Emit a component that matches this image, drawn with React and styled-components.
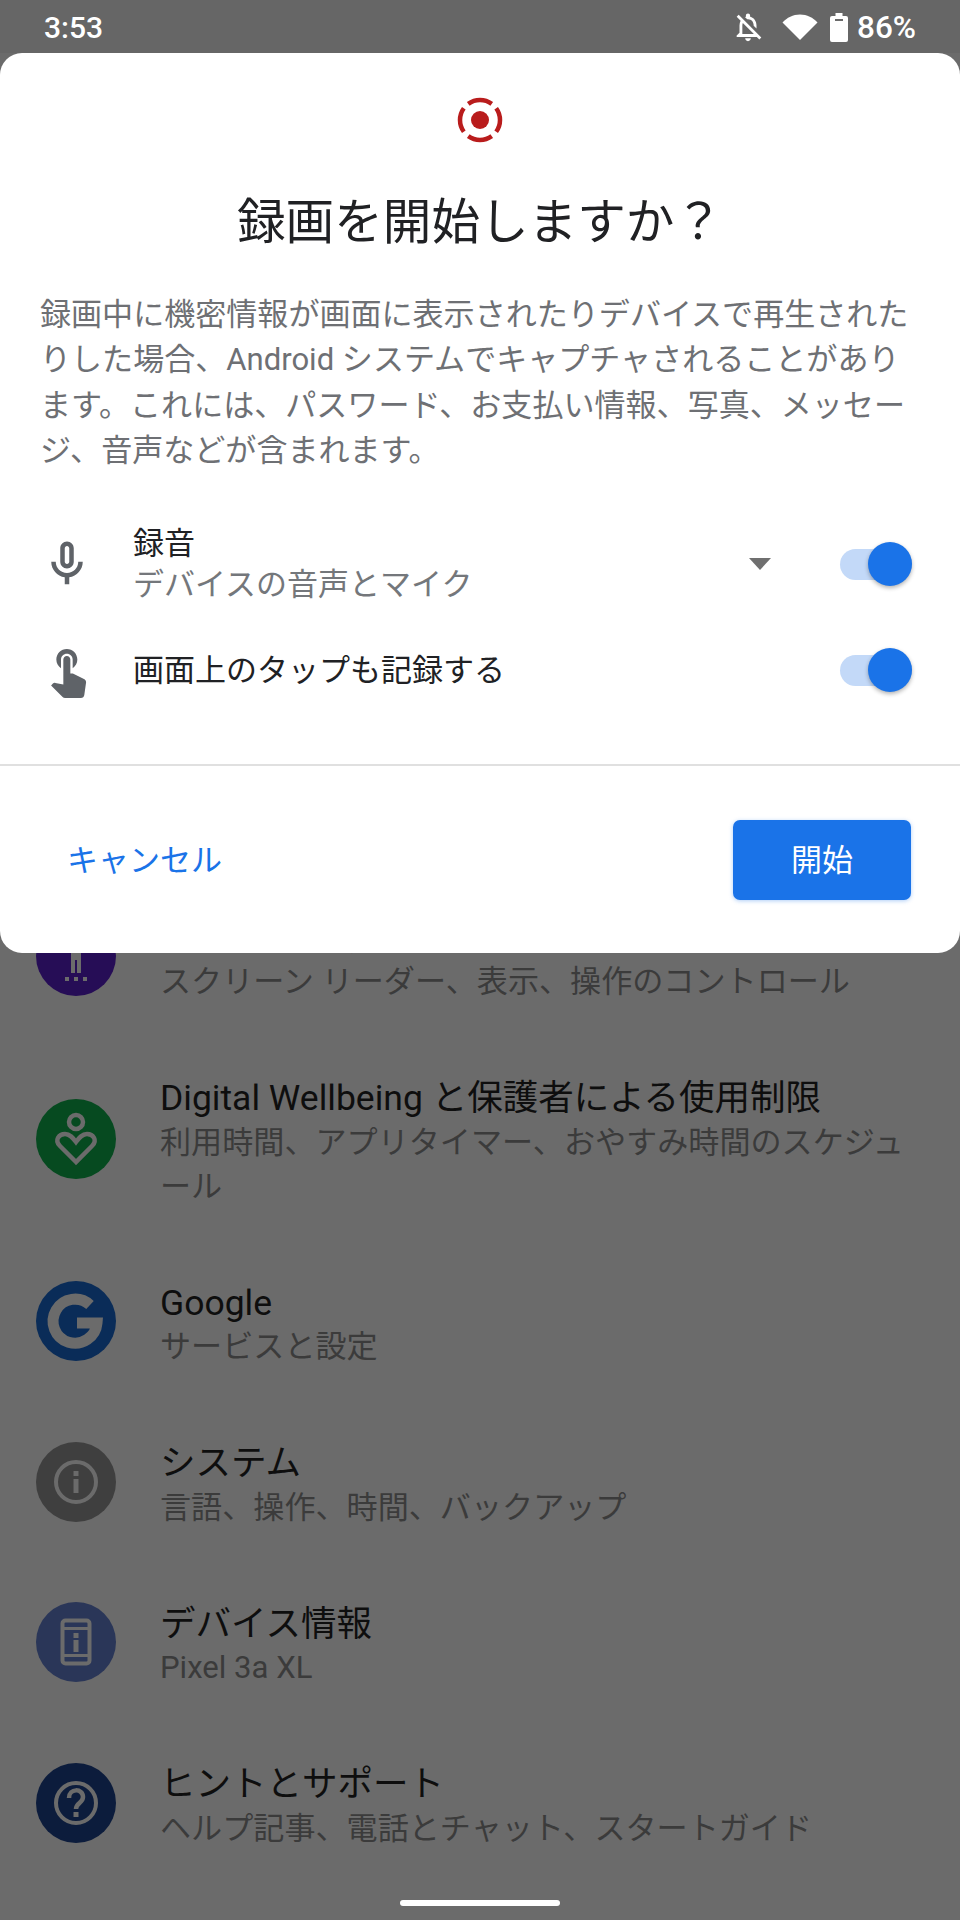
import React from 'react';
import styled, { createGlobalStyle } from 'styled-components';

const Global = createGlobalStyle`
  html, body {
    margin: 0;
    padding: 0;
    background: #6b6b6b;
  }
  * {
    box-sizing: border-box;
  }
`;

const FONT = `Roboto, "Noto Sans CJK JP", "Noto Sans", sans-serif`;

const settings = [
  {
    title: 'ユーザー補助',
    lines: ['スクリーン リーダー、表示、操作のコントロール'],
    color: '#260d56',
    icon: 'a11y',
  },
  {
    title: 'Digital Wellbeing と保護者による使用制限',
    lines: ['利用時間、アプリタイマー、おやすみ時間のスケジュ', 'ール'],
    color: '#064a20',
    icon: 'wellbeing',
  },
  { title: 'Google', lines: ['サービスと設定'], color: '#0a2c58', icon: 'google' },
  { title: 'システム', lines: ['言語、操作、時間、バックアップ'], color: '#3f3f3f', icon: 'info' },
  { title: 'デバイス情報', lines: ['Pixel 3a XL'], color: '#2a3658', icon: 'device' },
  { title: 'ヒントとサポート', lines: ['ヘルプ記事、電話とチャット、スタートガイド'], color: '#0c1c3c', icon: 'help' },
];

function SettingIcon({ name }) {
  const c = '#6b6b6b';
  if (name === 'a11y') {
    return (
      <svg width="80" height="80" viewBox="0 0 80 80" fill={c}>
        <rect x="35" y="20" width="10" height="24" />
        <rect x="35" y="44" width="4" height="13" />
        <rect x="41" y="44" width="4" height="13" />
        <rect x="29" y="61" width="4" height="4" />
        <rect x="38" y="61" width="4" height="4" />
        <rect x="47" y="61" width="4" height="4" />
      </svg>
    );
  }
  if (name === 'wellbeing') {
    return (
      <svg width="80" height="80" viewBox="0 0 80 80" fill="none" stroke={c} strokeWidth="4.5">
        <circle cx="40" cy="23" r="7" />
        <path d="M40 63 L24 47 C18 41 23 35 29 35 C34 35 37 39 40 43 C43 39 46 35 51 35 C57 35 62 41 56 47 Z" />
      </svg>
    );
  }
  if (name === 'google') {
    return (
      <svg width="80" height="80" viewBox="0 0 80 80" fill="none" stroke={c} strokeWidth="11">
        <path d="M54 24 A 22 22 0 1 0 61 42 L41 42" />
      </svg>
    );
  }
  if (name === 'info') {
    return (
      <svg width="80" height="80" viewBox="0 0 80 80" fill={c}>
        <circle cx="40" cy="40" r="20" fill="none" stroke={c} strokeWidth="4" />
        <rect x="37.5" y="37" width="5" height="14" />
        <rect x="37.5" y="29" width="5" height="5" />
      </svg>
    );
  }
  if (name === 'device') {
    return (
      <svg width="80" height="80" viewBox="0 0 80 80" fill={c}>
        <rect x="26.5" y="18.5" width="27" height="43" rx="3" fill="none" stroke={c} strokeWidth="4" />
        <rect x="26" y="25" width="28" height="3" />
        <rect x="26" y="52" width="28" height="3" />
        <rect x="37.5" y="38" width="5" height="12" />
        <rect x="37.5" y="31" width="5" height="5" />
      </svg>
    );
  }
  return (
    <svg width="80" height="80" viewBox="0 0 80 80" fill="none" stroke={c}>
      <circle cx="40" cy="40" r="20" strokeWidth="4" />
      <path d="M33 35 C33 25 47 25 47 34 C47 40 40 40 40 46" strokeWidth="4.5" />
      <rect x="37.5" y="49" width="5" height="5" fill={c} stroke="none" />
    </svg>
  );
}

export default function App() {
  return (
    <Page>
      <Global />
      <StatusBar>
        <Clock>3:53</Clock>
        <StatusIcons>
          <svg width="34" height="34" viewBox="0 0 24 24" fill="#fff">
            <path d="M12 22c1.1 0 2-.9 2-2h-4c0 1.1.9 2 2 2zm0-15.5c2.49 0 4 2.02 4 4.5v.1l2 2V11c0-3.07-1.63-5.64-4.5-6.32V4c0-.83-.67-1.5-1.5-1.5s-1.5.67-1.5 1.5v.68c-.24.06-.47.15-.69.23l1.64 1.64c.18-.02.36-.05.55-.05zM5.41 3.35L4 4.76l2.81 2.81C6.29 8.57 6 9.74 6 11v5l-2 2v1h14.24l1.74 1.74 1.41-1.41L5.41 3.35zM16 17H8v-6c0-.68.12-1.32.34-1.9L16 16.76V17z" />
          </svg>
          <WifiIcon width="36" height="28" viewBox="0 0 36 28" fill="#fff">
            <path d="M0.5 9.5 C5 4.5 11 1.5 18 1.5 S31 4.5 35.5 9.5 L18 27 Z" />
          </WifiIcon>
          <BatteryIcon width="18" height="29" viewBox="0 0 18 29" fill="#fff">
            <path d="M5.5 0 H12.5 V3 H16 a2 2 0 0 1 2 2 V27 a2 2 0 0 1 -2 2 H2 a2 2 0 0 1 -2 -2 V5 a2 2 0 0 1 2 -2 H5.5 Z" />
            <rect x="5" y="6" width="8" height="2" fill="#6b6b6b" />
          </BatteryIcon>
          <Percent>86%</Percent>
        </StatusIcons>
      </StatusBar>

      <SettingsList>
        {settings.map((item) => (
          <SettingRow key={item.title}>
            <IconCircle $color={item.color}>
              <SettingIcon name={item.icon} />
            </IconCircle>
            <SettingText>
              <SettingTitle>{item.title}</SettingTitle>
              {item.lines.map((line) => (
                <SettingSub key={line}>{line}</SettingSub>
              ))}
            </SettingText>
          </SettingRow>
        ))}
      </SettingsList>

      <HomeBar />

      <Dialog>
        <RecordIcon width="48" height="48" viewBox="0 0 48 48" fill="none" stroke="#b91c1c" strokeWidth="4.5">
          <path d="M12.24 7.82 A20 20 0 0 1 35.76 7.82" />
          <path d="M40.18 12.24 A20 20 0 0 1 40.18 35.76" />
          <path d="M35.76 40.18 A20 20 0 0 1 12.24 40.18" />
          <path d="M7.82 35.76 A20 20 0 0 1 7.82 12.24" />
          <circle cx="24" cy="24" r="9" fill="#b91c1c" stroke="none" />
        </RecordIcon>
        <Title>録画を開始しますか？</Title>
        <Body>
          録画中に機密情報が画面に表示されたりデバイスで再生された
          <br />
          りした場合、Android システムでキャプチャされることがあり
          <br />
          ます。これには、パスワード、お支払い情報、写真、メッセー
          <br />
          ジ、音声などが含まれます。
        </Body>

        <OptionList>
          <OptionRow>
            <OptionIcon>
              <svg width="54" height="54" viewBox="0 0 24 24" fill="#5f6368">
                <path
                  fillRule="evenodd"
                  d="M12 14c1.66 0 3-1.34 3-3V5c0-1.66-1.34-3-3-3S9 3.34 9 5v6c0 1.66 1.34 3 3 3zM11 5c0-.55.45-1 1-1s1 .45 1 1v6c0 .55-.45 1-1 1s-1-.45-1-1V5zM17 11c0 2.76-2.24 5-5 5s-5-2.24-5-5H5c0 3.53 2.61 6.43 6 6.92V21h2v-3.08c3.39-.49 6-3.39 6-6.92h-2z"
                />
              </svg>
            </OptionIcon>
            <OptionText>
              <OptionLabel>録音</OptionLabel>
              <OptionHint>デバイスの音声とマイク</OptionHint>
            </OptionText>
            <Caret />
            <Toggle />
          </OptionRow>
          <OptionRow>
            <OptionIcon>
              <svg width="56" height="56" viewBox="0 0 24 24" fill="#5f6368">
                <path d="M9 11.24V7.5C9 6.12 10.12 5 11.5 5S14 6.12 14 7.5v3.74c1.21-.81 2-2.18 2-3.74C16 5.01 13.99 3 11.5 3S7 5.01 7 7.5c0 1.56.79 2.93 2 3.74zm9.84 4.63l-4.54-2.26c-.17-.07-.35-.11-.54-.11H13v-6c0-.83-.67-1.5-1.5-1.5S10 6.67 10 7.5v10.74l-3.43-.72c-.08-.01-.15-.03-.24-.03-.31 0-.59.13-.79.33l-.79.8 4.94 4.94c.27.27.65.44 1.06.44h6.79c.75 0 1.33-.55 1.44-1.28l.75-5.27c.01-.07.02-.14.02-.2 0-.62-.38-1.16-.91-1.38z" />
              </svg>
            </OptionIcon>
            <OptionText>
              <OptionLabel>画面上のタップも記録する</OptionLabel>
            </OptionText>
            <Toggle />
          </OptionRow>
        </OptionList>

        <Divider />
        <Footer>
          <CancelButton>キャンセル</CancelButton>
          <StartButton>開始</StartButton>
        </Footer>
      </Dialog>
    </Page>
  );
}

const Page = styled.div`
  position: relative;
  width: 960px;
  height: 1920px;
  overflow: hidden;
  background: #6b6b6b;
  font-family: ${FONT};
`;

const StatusBar = styled.div`
  display: flex;
  align-items: center;
  justify-content: space-between;
  height: 53px;
  padding: 1px 44px 0 44px;
  background: #666666;
  color: #fff;
`;

const Clock = styled.span`
  font-size: 30px;
  font-weight: 500;
`;

const StatusIcons = styled.div`
  display: flex;
  align-items: center;
`;

const WifiIcon = styled.svg`
  margin-left: 17px;
`;

const BatteryIcon = styled.svg`
  margin-left: 12px;
`;

const Percent = styled.span`
  margin-left: 9px;
  font-size: 31.5px;
  font-weight: 500;
`;

const SettingsList = styled.div`
  display: flex;
  flex-direction: column;
  margin-top: 823px;
`;

const SettingRow = styled.div`
  display: flex;
  align-items: center;
  gap: 44px;
  padding: 31.7px 20px 31.7px 36px;
`;

const IconCircle = styled.div`
  flex: none;
  width: 80px;
  height: 80px;
  border-radius: 50%;
  background: ${(p) => p.$color};
`;

const SettingText = styled.div`
  padding-top: 8px;
`;

const SettingTitle = styled.div`
  font-size: 35.5px;
  line-height: 44.5px;
  color: #0e0e0e;
  white-space: nowrap;
`;

const SettingSub = styled.div`
  font-size: 31.1px;
  line-height: 44.5px;
  color: #3b3b3b;
  white-space: nowrap;
`;

const HomeBar = styled.div`
  position: absolute;
  left: 400px;
  bottom: 14px;
  width: 160px;
  height: 6px;
  border-radius: 3px;
  background: #fff;
`;

const Dialog = styled.div`
  position: absolute;
  top: 53px;
  left: 0;
  width: 960px;
  height: 900px;
  padding-top: 43px;
  background: #fff;
  border-radius: 22px;
  display: flex;
  flex-direction: column;
`;

const RecordIcon = styled.svg`
  align-self: center;
  flex: none;
`;

const Title = styled.div`
  margin-top: 49px;
  font-size: 48.6px;
  line-height: 60px;
  text-align: center;
  color: #202124;
`;

const Body = styled.div`
  margin-top: 39px;
  padding: 0 40px;
  font-size: 31.05px;
  line-height: 45.3px;
  color: #6e7074;
  white-space: nowrap;
`;

const OptionList = styled.div`
  margin-top: 38px;
`;

const OptionRow = styled.div`
  display: flex;
  align-items: center;
  height: 106px;
  padding: 0 48px 0 40px;
`;

const OptionIcon = styled.div`
  flex: none;
  display: flex;
  width: 93px;
`;

const OptionText = styled.div`
  flex: 1;
`;

const OptionLabel = styled.div`
  font-size: 31px;
  line-height: 41px;
  color: #202124;
`;

const OptionHint = styled.div`
  font-size: 31px;
  line-height: 41px;
  color: #74777b;
`;

const Caret = styled.div`
  width: 0;
  height: 0;
  margin-right: 69px;
  border-left: 11px solid transparent;
  border-right: 11px solid transparent;
  border-top: 12px solid #6f6f6f;
`;

const Toggle = styled.div`
  position: relative;
  flex: none;
  width: 72px;
  height: 31px;
  border-radius: 16px;
  background: #c3d9f8;
  &::after {
    content: '';
    position: absolute;
    top: -6.5px;
    right: 0;
    width: 44px;
    height: 44px;
    border-radius: 50%;
    background: #1a73e8;
    box-shadow: 0 2px 4px rgba(0, 0, 0, 0.3);
  }
`;

const Divider = styled.div`
  height: 2px;
  margin-top: 41px;
  background: #e0e0e0;
`;

const Footer = styled.div`
  flex: 1;
  display: flex;
  align-items: center;
  justify-content: space-between;
  padding: 0 49px 0 67px;
`;

const CancelButton = styled.div`
  padding-bottom: 4px;
  font-size: 31px;
  color: #1a73e8;
`;

const StartButton = styled.div`
  display: flex;
  align-items: center;
  justify-content: center;
  width: 178px;
  height: 80px;
  padding-bottom: 4px;
  border-radius: 7px;
  background: #1a73e8;
  color: #fff;
  font-size: 31px;
  box-shadow: 0 1px 4px rgba(26, 115, 232, 0.35);
`;
